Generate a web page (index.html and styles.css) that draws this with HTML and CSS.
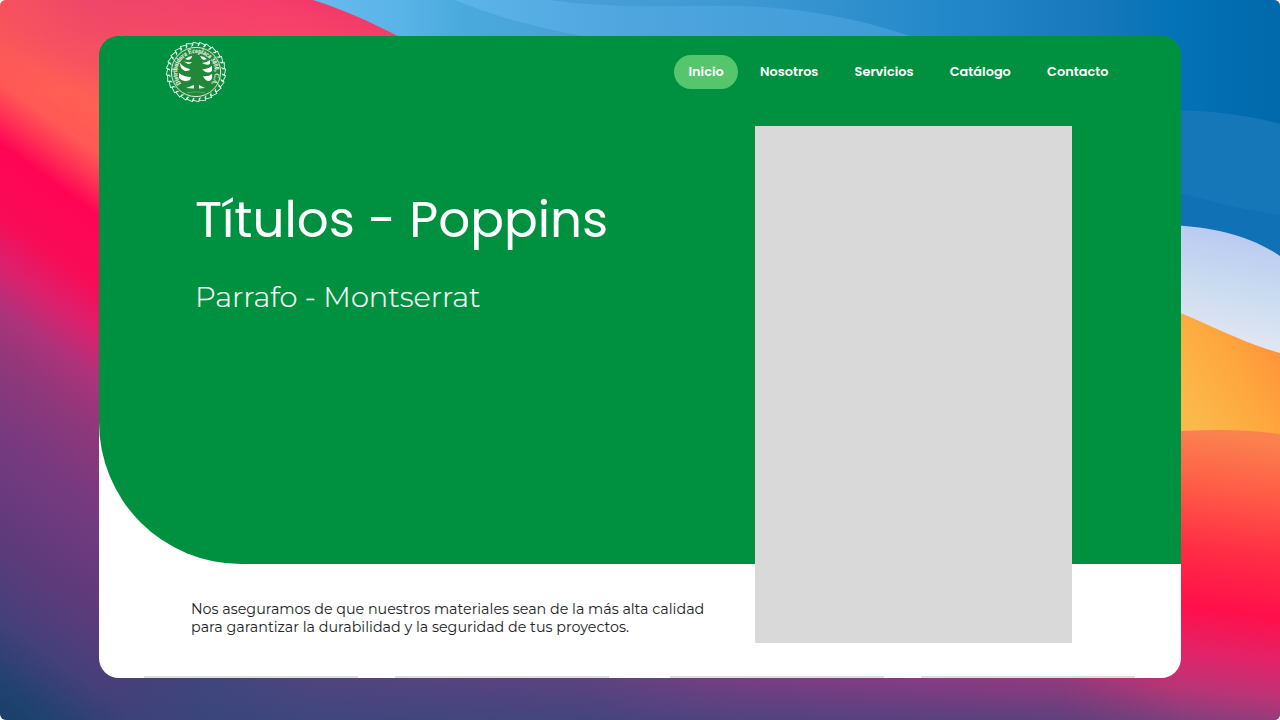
FILE: index.html
```html
<!DOCTYPE html>
<html lang="es">
<head>
<meta charset="utf-8">
<title>Distribuidora Ecoplaca 3000, C.A.</title>
<link rel="stylesheet" href="styles.css">
</head>
<body>
<div class="desktop">
  <svg class="wallpaper" viewBox="0 0 1280 720" aria-hidden="true">
    <defs>
      <linearGradient id="warm" gradientUnits="userSpaceOnUse" x1="0" y1="0" x2="0" y2="720" gradientTransform="skewY(36)">
        <stop offset="0" stop-color="#fb5a5c"/><stop offset=".06" stop-color="#ff6054"/>
        <stop offset=".115" stop-color="#ff5856"/><stop offset=".155" stop-color="#ff3355"/><stop offset=".2" stop-color="#ff0455"/>
        <stop offset=".3" stop-color="#f80c57"/><stop offset=".365" stop-color="#dc206c"/>
        <stop offset=".43" stop-color="#ac337a"/><stop offset=".51" stop-color="#8c387a"/>
        <stop offset=".62" stop-color="#743a80"/><stop offset=".76" stop-color="#5b3b7a"/>
        <stop offset=".86" stop-color="#44407a"/><stop offset=".95" stop-color="#204270"/>
        <stop offset="1" stop-color="#183f69"/>
      </linearGradient>
      <linearGradient id="top" x1="0" x2="1" y1="0" y2="0">
        <stop offset="0" stop-color="#f6525e"/><stop offset=".22" stop-color="#ee466a"/>
        <stop offset=".65" stop-color="#f53d6c"/><stop offset="1" stop-color="#ee306b"/>
      </linearGradient>
      <linearGradient id="topFade" x1="0" x2="0" y1="0" y2="1">
        <stop offset="0" stop-color="#fff"/><stop offset=".35" stop-color="#bbb"/><stop offset="1" stop-color="#000"/>
      </linearGradient>
      <mask id="topMask"><rect width="420" height="90" fill="url(#topFade)"/></mask>
      <linearGradient id="blue" gradientUnits="userSpaceOnUse" x1="320" x2="1280" y1="0" y2="0">
        <stop offset="0" stop-color="#68b9ee"/><stop offset=".08" stop-color="#5ab4e8"/>
        <stop offset=".15" stop-color="#4aaadd"/><stop offset=".27" stop-color="#489fd6"/><stop offset=".45" stop-color="#3d98d2"/>
        <stop offset=".65" stop-color="#2388c9"/><stop offset=".81" stop-color="#1778bb"/>
        <stop offset=".89" stop-color="#0472b7"/><stop offset="1" stop-color="#0069ab"/>
      </linearGradient>
      <linearGradient id="wave" gradientUnits="userSpaceOnUse" x1="455" x2="912" y1="0" y2="0">
        <stop offset="0" stop-color="#5bb4ea"/><stop offset=".4" stop-color="#4fa5de"/><stop offset="1" stop-color="#3e9ad6"/>
      </linearGradient>
      <linearGradient id="ice" gradientUnits="userSpaceOnUse" x1="1230" x2="1210" y1="228" y2="340">
        <stop offset="0" stop-color="#b9c9f2"/><stop offset=".5" stop-color="#c9dbf0"/><stop offset="1" stop-color="#e2e6f2"/>
      </linearGradient>
      <linearGradient id="amber" gradientUnits="userSpaceOnUse" x1="1190" y1="415" x2="1285" y2="360">
        <stop offset="0" stop-color="#fbb94b"/><stop offset=".55" stop-color="#fda83e"/><stop offset="1" stop-color="#ff943b"/>
      </linearGradient>
      <linearGradient id="fire" gradientUnits="userSpaceOnUse" x1="1190" y1="431" x2="1155" y2="720">
        <stop offset="0" stop-color="#fb814f"/><stop offset=".18" stop-color="#ff5d47"/>
        <stop offset=".4" stop-color="#ff2d45"/><stop offset=".6" stop-color="#ff0f4b"/>
        <stop offset=".75" stop-color="#e32368"/><stop offset=".88" stop-color="#b83577"/><stop offset="1" stop-color="#7b417e"/>
      </linearGradient>
      <linearGradient id="floor" x1="0" x2="1" y1="0" y2="0">
        <stop offset="0" stop-color="#253f70"/><stop offset=".08" stop-color="#33457a"/>
        <stop offset=".25" stop-color="#54447f"/><stop offset=".46" stop-color="#604280"/>
        <stop offset=".55" stop-color="#7a3e83"/><stop offset=".7" stop-color="#8f3a83"/>
        <stop offset=".82" stop-color="#9c397e"/><stop offset=".94" stop-color="#b93474"/><stop offset="1" stop-color="#d52c61"/>
      </linearGradient>
      <linearGradient id="dusk" x1="0" x2="0" y1="0" y2="1">
        <stop offset="0" stop-color="#32477c" stop-opacity="0"/><stop offset="1" stop-color="#32477c" stop-opacity=".6"/>
      </linearGradient>
      <linearGradient id="floorFade" gradientUnits="userSpaceOnUse" x1="100" x2="200" y1="0" y2="0">
        <stop offset="0" stop-color="#000"/><stop offset="1" stop-color="#fff"/>
      </linearGradient>
      <mask id="floorMask"><rect y="650" width="1280" height="70" fill="url(#floorFade)"/></mask>
      <linearGradient id="right" gradientUnits="userSpaceOnUse" x1="1060" x2="1180" y1="0" y2="0">
        <stop offset="0" stop-color="#000"/><stop offset="1" stop-color="#fff"/>
      </linearGradient>
      <mask id="rightMask" maskUnits="userSpaceOnUse" x="1040" y="400" width="240" height="320"><rect x="1040" y="400" width="240" height="320" fill="url(#right)"/></mask>
    </defs>
    <rect width="1280" height="720" fill="url(#warm)"/>
    <rect width="420" height="90" fill="url(#top)" mask="url(#topMask)"/>
    <g mask="url(#floorMask)">
      <rect y="670" width="1280" height="50" fill="url(#floor)"/>
      <rect y="670" width="1280" height="50" fill="url(#dusk)"/>
    </g>
    <path d="M313 0C345 10 370 22 402 38V60H1170V260H1280V0Z" fill="url(#blue)"/>
    <path d="M455 0H550C600 8 660 6 740 6C800 8 860 18 915 38H592C540 28 495 17 455 0Z" fill="url(#wave)"/>
    <path d="M1170 110Q1235 111 1280 124V270H1170Z" fill="#1576b8"/>
    <path d="M1170 190Q1225 207 1280 215V270H1170Z" fill="#1072b5"/>
    <path d="M1170 225C1215 227 1250 236 1280 256V370H1170Z" fill="url(#ice)"/>
    <path d="M1170 309C1210 324 1240 342 1280 353V450H1170Z" fill="url(#amber)"/>
    <path d="M1040 431H1181Q1240 428 1280 434V720H1040Z" fill="url(#fire)" mask="url(#rightMask)"/>
  </svg>

  <main class="window">
    <section class="hero">
      <header class="header">
        <svg class="logo" viewBox="-32 -32 64 64" role="img" aria-label="Distribuidora Ecoplaca 3000, C.A.">
          <defs>
            <path id="tooth" d="M-3.2-26.8L-3-29.7L3-28.4L1.8-26.2L3.2-26.8"/>
            <g id="pair"><use href="#tooth"/><use href="#tooth" transform="rotate(12.857)"/></g>
            <g id="quad"><use href="#pair"/><use href="#pair" transform="rotate(25.714)"/></g>
            <path id="ring" d="M-15 11.7A19 19 0 1 1 15 11.7"/>
          </defs>
          <circle r="26" fill="#208838"/>
          <g class="logo-line">
            <use href="#quad"/><use href="#quad" transform="rotate(51.429)"/><use href="#quad" transform="rotate(102.857)"/>
            <use href="#quad" transform="rotate(154.286)"/><use href="#quad" transform="rotate(205.714)"/>
            <use href="#quad" transform="rotate(257.143)"/><use href="#quad" transform="rotate(308.571)"/>
            <circle r="24.6"/>
          </g>
          <text class="logo-text"><textPath href="#ring" textLength="84" lengthAdjust="spacingAndGlyphs">Distribuidora Ecoplaca 3000, C.A.</textPath></text>
          <path fill="#fff" d="M-11-13Q-7-16-4-16Q-4-13-8-12ZM-13-11Q-9-9-4-10Q-5-8-8-8ZM-16-9Q-12-4-6-3Q-6-1-11-1Q-16-3-16-9ZM-17 1Q-12 5-5 5L-6 8Q-13 11-17 6ZM4-16Q8-16 11-13L8-12Q5-13 4-16ZM6-9Q10-9 14-12L14-8Q11-6 6-9ZM6-3Q11-2 16-6L16-1Q11 3 6-3ZM7 4Q12 5 16 2Q17 8 13 9Q9 9 7 4ZM-10 16L-2 13V16.5ZM3 13L9 16L3 16.5Z"/>
          <path d="M-9 20.7Q0 18.9 9 20.7" fill="none" stroke="#79b582" stroke-width=".6"/>
        </svg>
        <nav class="nav">
          <a class="nav-link nav-link-active">Inicio</a>
          <a class="nav-link">Nosotros</a>
          <a class="nav-link">Servicios</a>
          <a class="nav-link">Catálogo</a>
          <a class="nav-link">Contacto</a>
        </nav>
      </header>
      <h1 class="title">Títulos - Poppins</h1>
      <p class="subtitle">Parrafo - Montserrat</p>
      <div class="picture"></div>
    </section>
    <p class="copy">Nos aseguramos de que nuestros materiales sean de la más alta calidad<br>para garantizar la durabilidad y la seguridad de tus proyectos.</p>
    <div class="cards">
      <div class="card"></div><div class="card"></div><div class="card"></div><div class="card"></div>
    </div>
  </main>
</div>
</body>
</html>
```
FILE: styles.css
```css
* { box-sizing: border-box; }
body { margin: 0; background: #fff; }
.desktop {
  position: relative;
  width: 1280px;
  height: 720px;
  padding: 36px 99px 42px;
  overflow: hidden;
  border-radius: 6px;
}
.wallpaper { position: absolute; inset: 0; width: 1280px; height: 720px; }
.window {
  position: relative;
  display: flex;
  flex-direction: column;
  width: 1082px;
  height: 642px;
  overflow: hidden;
  border-radius: 20px;
  background: linear-gradient(#009140 100px, #fff 100px);
}
.hero {
  position: relative;
  height: 528px;
  flex: none;
  padding-left: 65px;
  border-bottom-left-radius: 142px;
  background: #009140;
  color: #fff;
  font-family: Poppins, Inter, sans-serif;
}
.header { display: flex; justify-content: space-between; height: 72px; align-items: center; padding-right: 58px; }
.logo { width: 64px; height: 64px; }
.logo-line { fill: none; stroke: #e4f2e6; stroke-width: .95; }
.logo-text { font: bold 6.8px "Liberation Serif", serif; fill: #e4f2e6; stroke: #e4f2e6; stroke-width: .15px; }
.nav { display: flex; gap: 7px; }
.nav-link {
  display: flex;
  align-items: center;
  height: 34px;
  padding: 0 14.6px;
  border-radius: 17px;
  font-size: 12.9px;
  font-weight: 600;
}
.nav-link-active { background: #56c66d; }
.title { margin: 79px 0 0 31px; font-size: 50px; line-height: 66px; font-weight: 400; }
.subtitle { margin: 26px 0 0 31px; font-family: Montserrat, Inter, sans-serif; font-size: 28.9px; line-height: 36px; font-weight: 300; -webkit-text-stroke: .2px #fff; }
.picture { position: absolute; left: 656px; top: 89.5px; width: 317px; height: 517.5px; background: #d9d9d9; z-index: 1; }
.copy {
  margin: 37px 0 0 92px;
  font-family: Montserrat, Inter, sans-serif;
  font-size: 14.3px;
  line-height: 17.5px;
  color: #222;
  white-space: nowrap;
}
.cards { display: grid; grid-template-columns: repeat(4, 214px); column-gap: 37px; margin: auto 0 0 45px; }
.card { height: 2px; background: #dedede; }
.card:nth-child(n+3) { transform: translateX(24px); }
```
